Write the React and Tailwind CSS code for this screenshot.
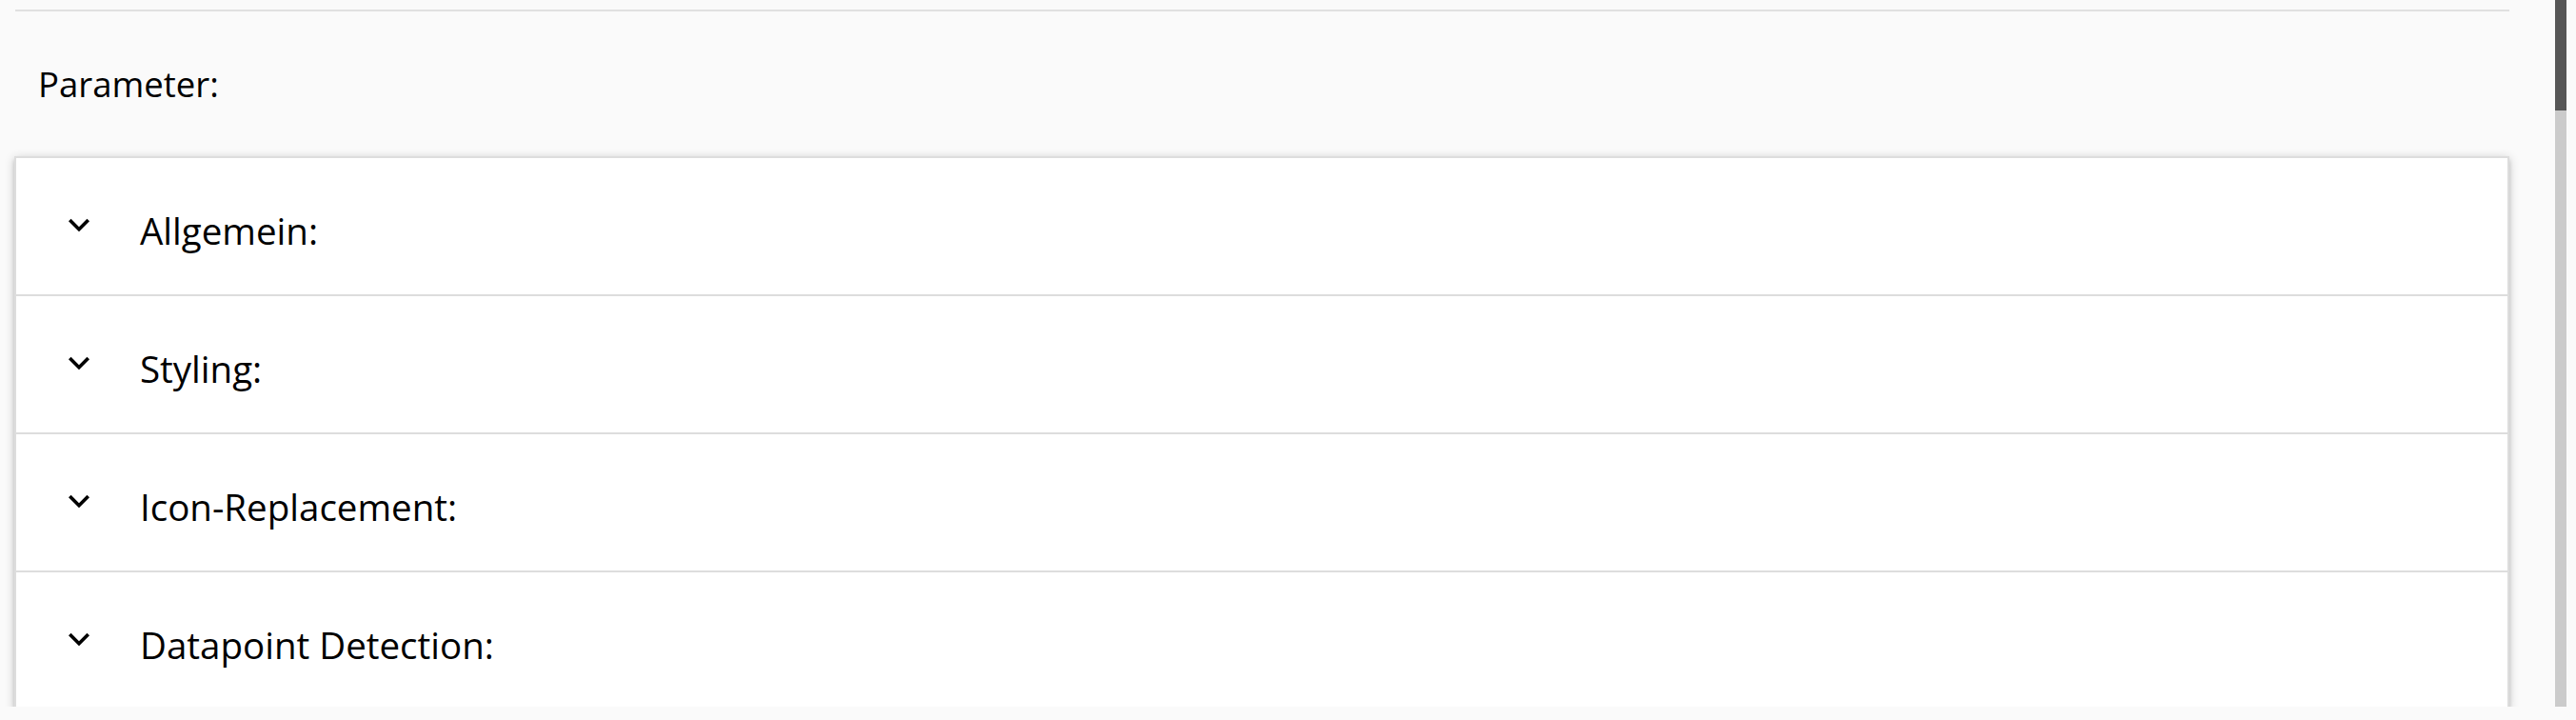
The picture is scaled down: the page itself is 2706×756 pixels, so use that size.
import React from "react";

function Chevron() {
  return (
    <svg width="44" height="44" viewBox="0 0 24 24" className="shrink-0 -mt-[4px]" aria-hidden="true">
      <path d="M7.41 8.59L12 13.17l4.59-4.58L18 10l-6 6-6-6 1.41-1.41z" fill="#000" />
    </svg>
  );
}

const sections = ["Allgemein:", "Styling:", "Icon-Replacement:", "Datapoint Detection:"];

export default function App() {
  return (
    <div className="w-[2706px] h-[756px] bg-[#fafafa] overflow-hidden text-black" style={{ fontFamily: '"Open Sans", "Noto Sans", sans-serif' }}>
      <div className="flex h-[742px]">
        <div className="w-[2684px] h-full overflow-hidden pl-[15px] pr-[48px] pt-[10px]">
          <div className="ml-px h-[2px] bg-[#e0e0e0]" />
          <div className="h-[152px] flex items-center pl-[25px] text-[36.5px] leading-none">Parameter:</div>
          <div className="bg-white border-2 border-b-0 border-[#dddddd] shadow-[0_4px_4px_0_rgba(0,0,0,0.14),0_6px_2px_-4px_rgba(0,0,0,0.12),0_2px_10px_0_rgba(0,0,0,0.2)]">
            {sections.map((s) => (
              <div key={s} className="h-[145px] border-b-2 border-[#dddddd] flex items-center pl-[44px]">
                <Chevron />
                <span className="ml-[42px] pt-[10px] text-[38.5px] leading-none">{s}</span>
              </div>
            ))}
          </div>
        </div>
        <div className="w-[12px] h-full flex flex-col">
          <div className="h-[116px] bg-[#565656]" />
          <div className="flex-1 bg-[#cbcbcb]" />
        </div>
      </div>
    </div>
  );
}
